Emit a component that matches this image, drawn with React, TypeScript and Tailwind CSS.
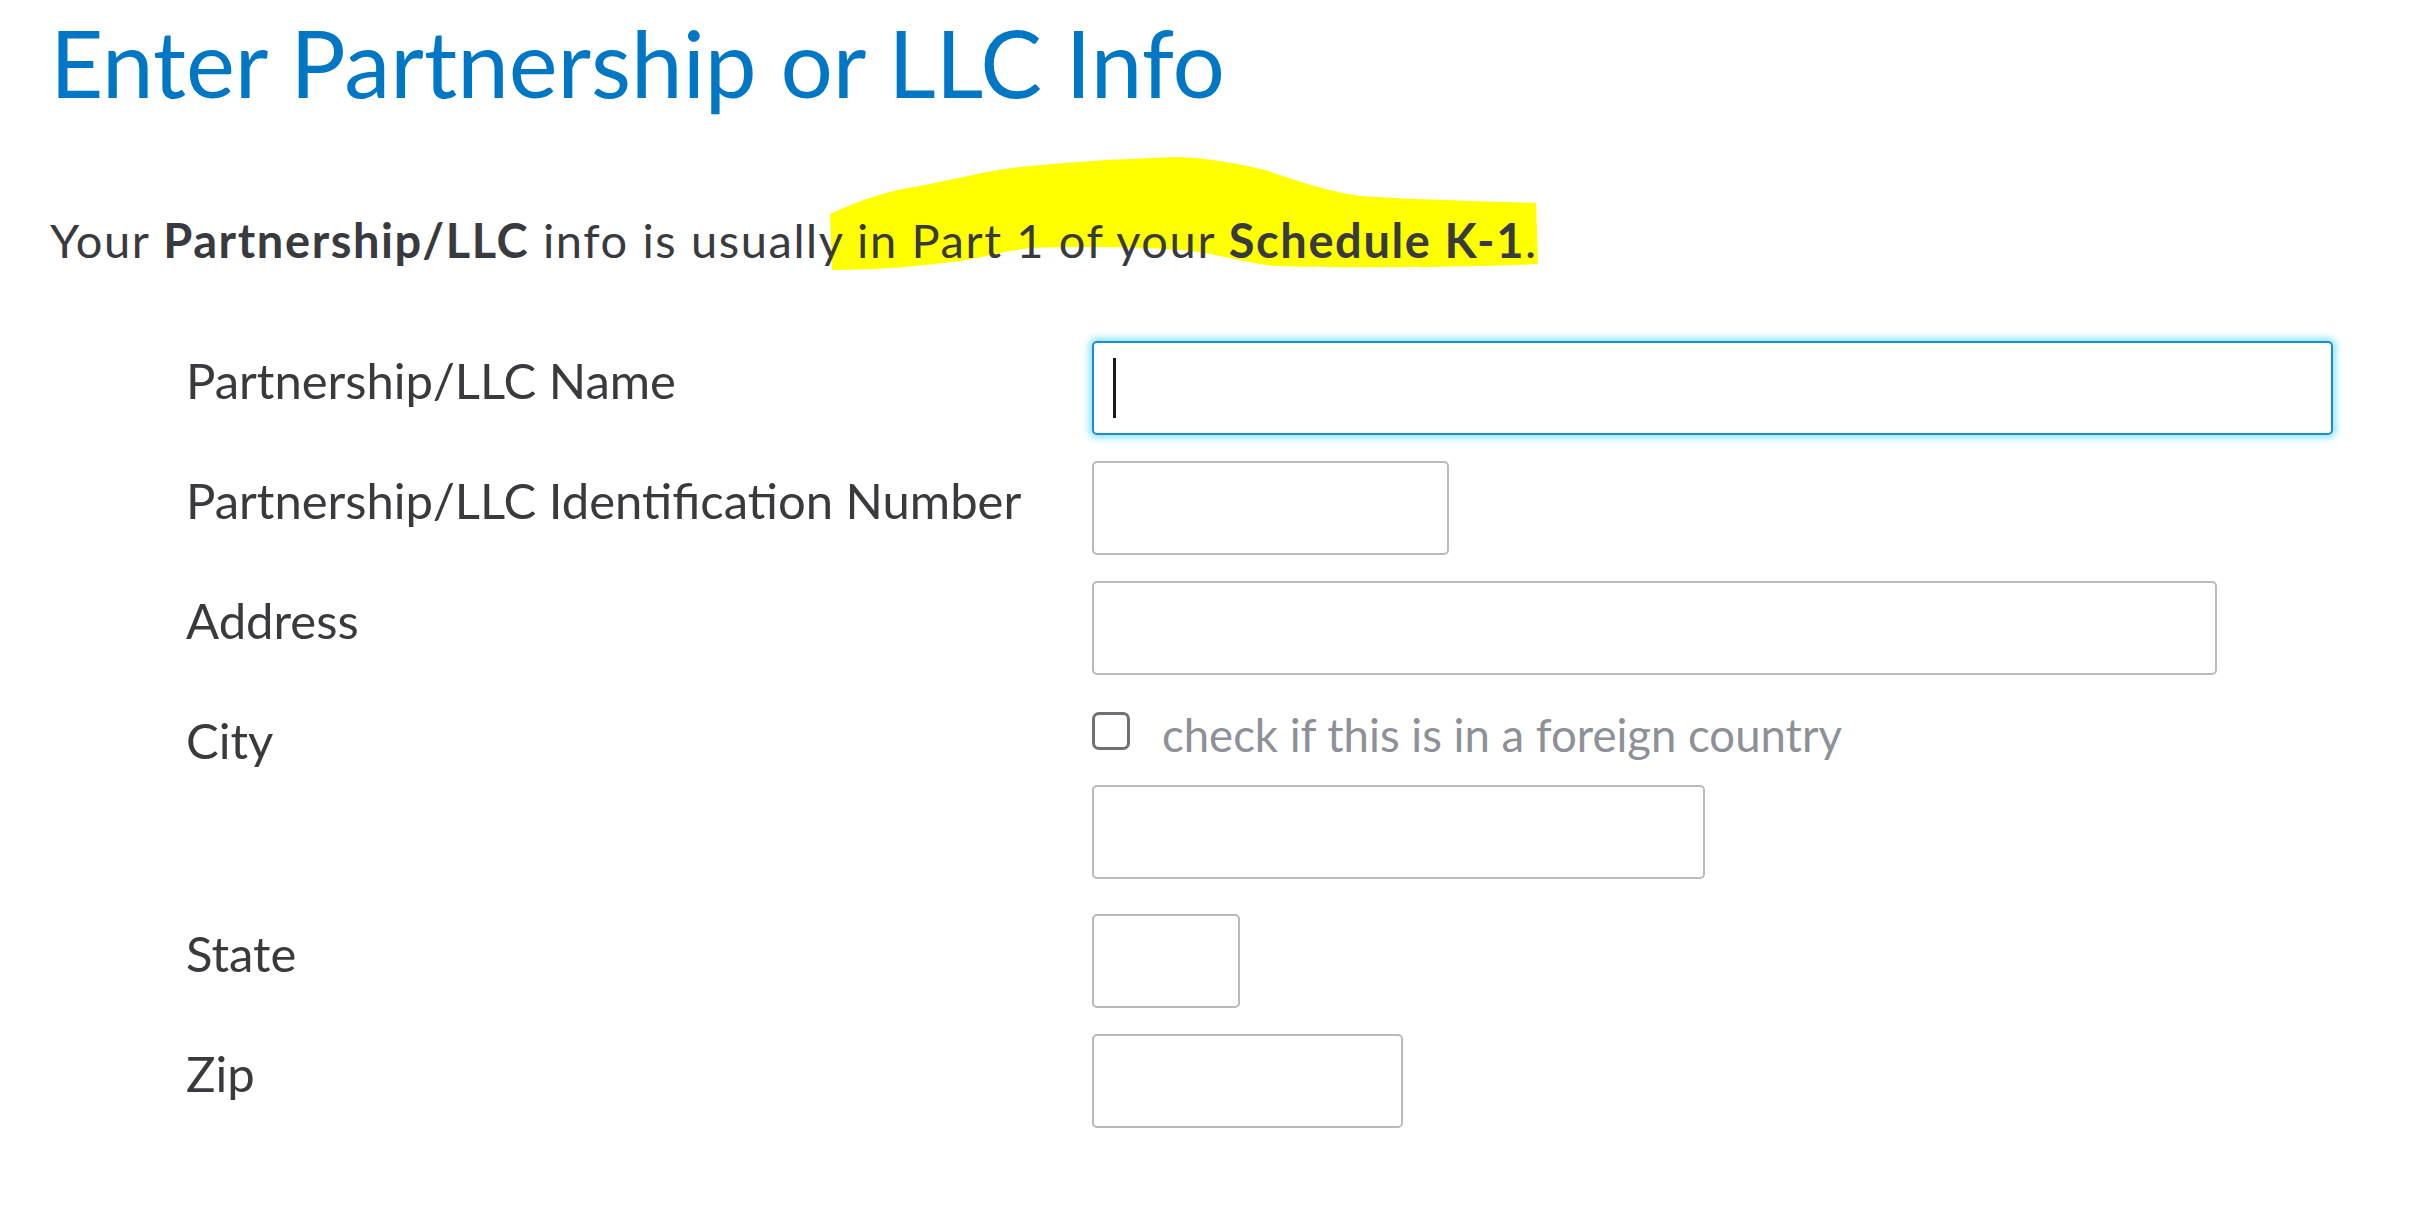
import React from "react";

// one row of the form: label on the left, control(s) on the right
function Row({
  label,
  children,
  className = "",
}: {
  label: string;
  children: React.ReactNode;
  className?: string;
}) {
  return (
    <div className={`flex ${className}`}>
      <div className="w-[906px] shrink-0 pt-[15px] text-[49px] leading-none">{label}</div>
      <div className="flex flex-col">{children}</div>
    </div>
  );
}

function Box({ width }: { width: string }) {
  return (
    <input
      type="text"
      className={`${width} h-[94px] rounded-[5px] border-2 border-[#bababa] bg-white outline-none`}
    />
  );
}

export default function App() {
  return (
    <div className="relative min-h-screen bg-white font-['Lato',sans-serif] text-[#393a3d]">
      {/* highlighter scribble over the K-1 hint */}
      <svg
        className="absolute left-0 top-0 pointer-events-none"
        width="2433"
        height="400"
        viewBox="0 0 2433 400"
      >
        <path
          d="M830 214 C860 200 890 190 920 186 C960 178 990 170 1020 167 C1060 163 1100 160 1130 159 L1175 157 C1210 158 1240 164 1265 170 C1290 178 1320 190 1360 196 C1420 200 1480 201 1536 203 L1538 264 C1460 268 1330 268 1275 266 C1240 262 1220 254 1190 251 C1150 247 1090 246 1030 248 C1000 252 980 258 960 261 C920 266 880 270 832 270 Z"
          fill="#ffff00"
        />
      </svg>

      <h1 className="relative pl-[50px] pt-[17px] text-[92.5px] leading-none font-normal text-[#0077c5]">
        Enter Partnership or LLC Info
      </h1>

      <p className="relative pl-[50px] pt-[107px] text-[47px] leading-none tracking-[1.6px]">
        Your <span className="font-bold">Partnership/LLC</span> info is usually in Part 1 of your{" "}
        <span className="font-bold">Schedule K-1</span>.
      </p>

      <div className="relative flex flex-col pl-[186px] pt-[77px]">
        <Row label="Partnership/LLC Name">
          <div className="w-[1241px] h-[94px] rounded-[5px] border-2 border-[#1b8fcd] bg-white shadow-[0_0_7px_3px_rgba(0,195,255,0.45)] flex items-center pl-[19px]">
            <span className="block w-[3px] h-[60px] bg-[#1a1a1a]" />
          </div>
        </Row>

        <Row label="Partnership/LLC Identification Number" className="mt-[26px]">
          <Box width="w-[357px]" />
        </Row>

        <Row label="Address" className="mt-[26px]">
          <Box width="w-[1125px]" />
        </Row>

        <Row label="City" className="mt-[26px]">
          <label className="flex items-center h-[60px] gap-[32px]">
            <span className="block w-[38px] h-[38px] rounded-[7px] border-[3px] border-[#6f7074] bg-white" />
            <span className="mt-[8px] text-[45.5px] leading-none text-[#8d9096]">
              check if this is in a foreign country
            </span>
          </label>
          <div className="mt-[24px]">
            <Box width="w-[613px]" />
          </div>
        </Row>

        <Row label="State" className="mt-[35px]">
          <Box width="w-[148px]" />
        </Row>

        <Row label="Zip" className="mt-[26px]">
          <Box width="w-[311px]" />
        </Row>
      </div>
    </div>
  );
}
